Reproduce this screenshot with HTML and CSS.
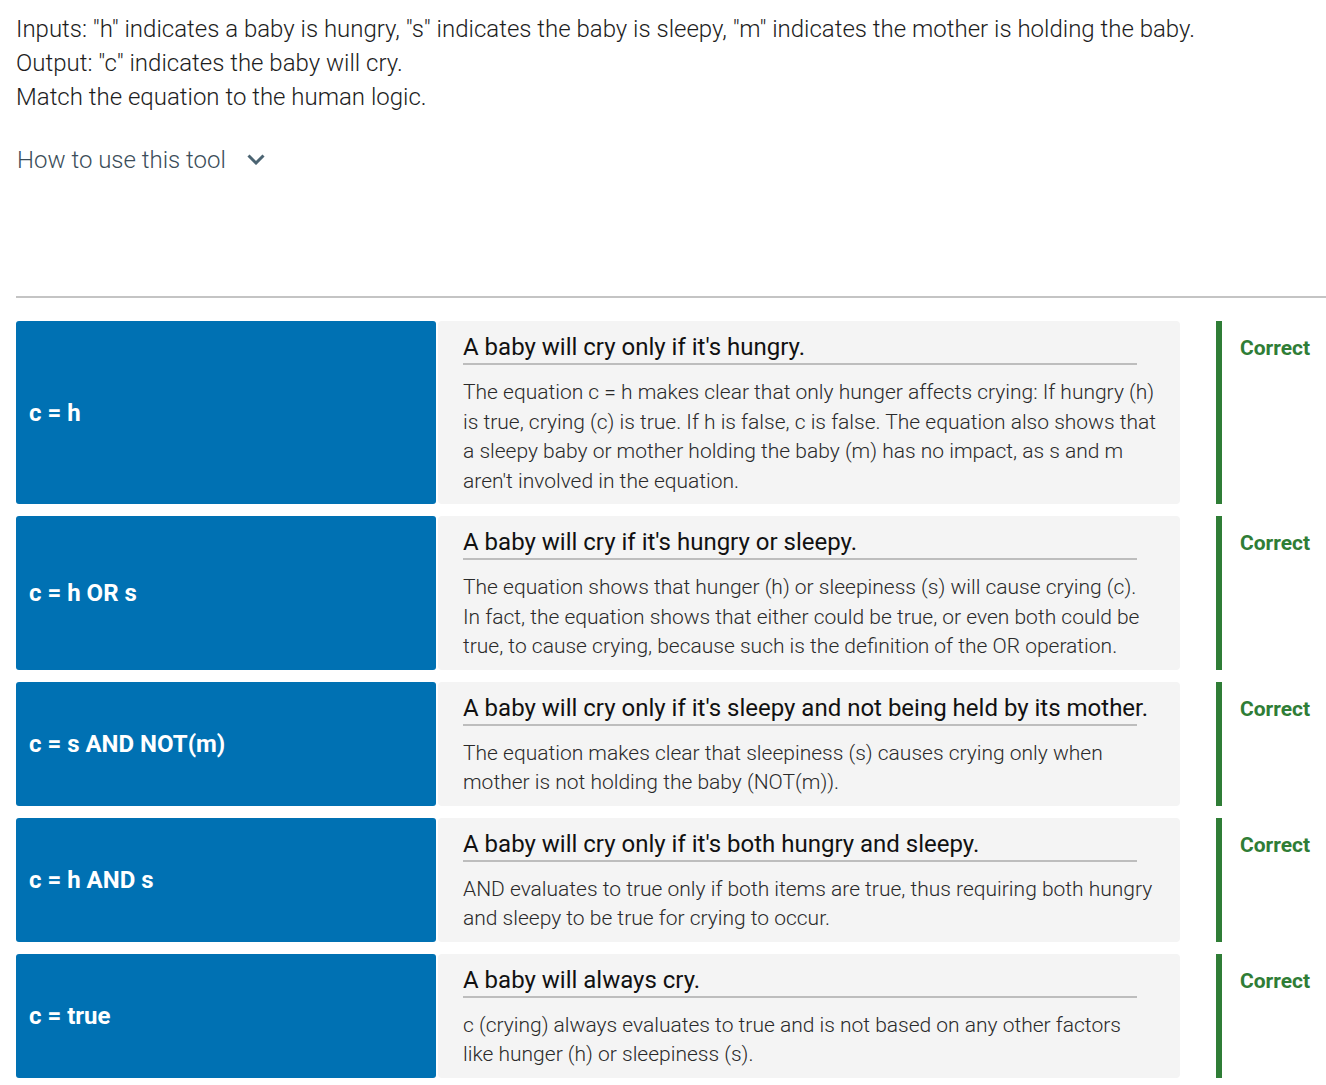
FILE: index.html
```html
<!DOCTYPE html>
<html lang="en">
<head>
<meta charset="utf-8">
<link rel="stylesheet" href="styles.css">
</head>
<body>
<div class="page">
  <div class="intro">
    <p>Inputs: "h" indicates a baby is hungry, "s" indicates the baby is sleepy, "m" indicates the mother is holding the baby.</p>
    <p>Output: "c" indicates the baby will cry.</p>
    <p>Match the equation to the human logic.</p>
  </div>
  <div class="howto">
    <span>How to use this tool</span>
    <svg class="chev" width="18" height="11" viewBox="0 0 18 11"><path d="M1.5 1.5 L9 9 L16.5 1.5" fill="none" stroke="#4b6472" stroke-width="3"/></svg>
  </div>
  <hr class="divider">
  <div class="rows">
    <div class="row">
      <div class="eq">c = h</div>
      <div class="card">
        <div class="title">A baby will cry only if it's hungry.</div>
        <div class="body">The equation c = h makes clear that only hunger affects crying: If hungry (h) is true, crying (c) is true. If h is false, c is false. The equation also shows that a sleepy baby or mother holding the baby (m) has no impact, as s and m aren't involved in the equation.</div>
      </div>
      <div class="result"><span>Correct</span></div>
    </div>
    <div class="row">
      <div class="eq">c = h OR s</div>
      <div class="card">
        <div class="title">A baby will cry if it's hungry or sleepy.</div>
        <div class="body">The equation shows that hunger (h) or sleepiness (s) will cause crying (c). In fact, the equation shows that either could be true, or even both could be true, to cause crying, because such is the definition of the OR operation.</div>
      </div>
      <div class="result"><span>Correct</span></div>
    </div>
    <div class="row">
      <div class="eq">c = s AND NOT(m)</div>
      <div class="card">
        <div class="title">A baby will cry only if it's sleepy and not being held by its mother.</div>
        <div class="body">The equation makes clear that sleepiness (s) causes crying only when mother is not holding the baby (NOT(m)).</div>
      </div>
      <div class="result"><span>Correct</span></div>
    </div>
    <div class="row">
      <div class="eq">c = h AND s</div>
      <div class="card">
        <div class="title">A baby will cry only if it's both hungry and sleepy.</div>
        <div class="body">AND evaluates to true only if both items are true, thus requiring both hungry and sleepy to be true for crying to occur.</div>
      </div>
      <div class="result"><span>Correct</span></div>
    </div>
    <div class="row">
      <div class="eq">c = true</div>
      <div class="card">
        <div class="title">A baby will always cry.</div>
        <div class="body">c (crying) always evaluates to true and is not based on any other factors like hunger (h) or sleepiness (s).</div>
      </div>
      <div class="result"><span>Correct</span></div>
    </div>
  </div>
</div>
</body>
</html>
```
FILE: styles.css
```css
html, body {
  margin: 0;
  padding: 0;
  background: #ffffff;
}
body {
  font-family: Roboto, "Liberation Sans", sans-serif;
  color: #222;
}
.page {
  padding: 12px 0 0 16px;
}
.intro p {
  margin: 0;
  font-size: 24px;
  font-weight: 300;
  line-height: 34px;
  color: #1d1d1d;
}
.howto {
  display: flex;
  align-items: center;
  gap: 21px;
  margin-top: 31px;
  padding-left: 1px;
  font-size: 24px;
  font-weight: 300;
  line-height: 30px;
  color: #3b4d59;
}
.chev {
  display: block;
  margin-top: -1px;
}
.divider {
  margin: 121px 0 0 0;
  border: 0;
  height: 2px;
  background: #c4c4c4;
}
.rows {
  margin-top: 23px;
  display: flex;
  flex-direction: column;
  gap: 12px;
}
.row {
  display: flex;
  align-items: stretch;
}
.eq {
  width: 420px;
  flex: none;
  background: #0071b3;
  border-radius: 3px;
  color: #fff;
  font-weight: 700;
  font-size: 24px;
  display: flex;
  align-items: center;
  padding-left: 13px;
  box-sizing: border-box;
}
.card {
  width: 742px;
  flex: none;
  margin-left: 2px;
  background: #f4f4f4;
  border-radius: 4px;
  box-sizing: border-box;
  padding: 11px 24px 8px 25px;
}
.title {
  width: 674px;
  white-space: nowrap;
  font-size: 24px;
  line-height: 30px;
  color: #111;
  padding-bottom: 1px;
  border-bottom: 2px solid #bdbdbd;
}
.body {
  margin-top: 13px;
  font-size: 21px;
  font-weight: 300;
  line-height: 29.5px;
  color: #2a2a2a;
}
.result {
  margin-left: 36px;
  border-left: 6px solid #2f7d36;
  padding: 14px 0 0 18px;
  font-size: 21px;
  font-weight: 700;
  color: #2f7d36;
  line-height: 26px;
}
```
